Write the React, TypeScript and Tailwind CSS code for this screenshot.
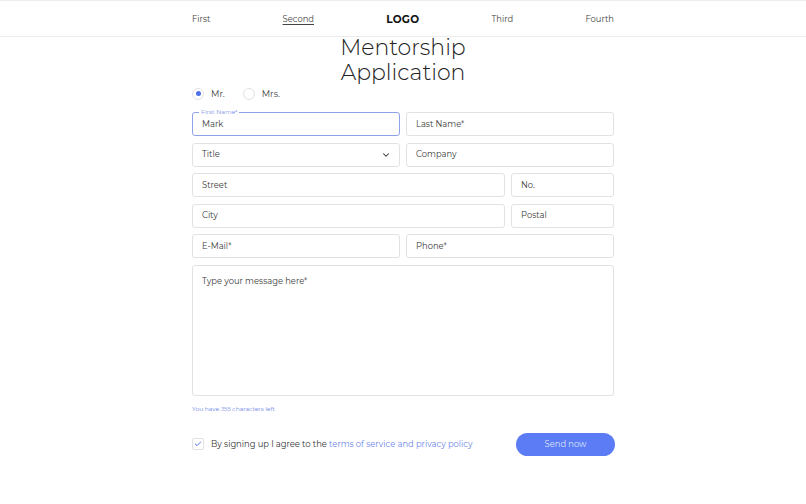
import { ChevronDown, Check } from 'lucide-react'

const font = { fontFamily: 'Montserrat, "Open Sans", "Liberation Sans", sans-serif' }

function Field({ label, className = '' }: { label: string; className?: string }) {
  return (
    <div
      className={`flex h-[24px] items-center rounded-[3px] border border-[#e2e2e2] px-[9px] text-[8.4px] text-[#3a3a3a] ${className}`}
    >
      {label}
    </div>
  )
}

export default function App() {
  return (
    <div className="min-h-[504px] w-full bg-white text-[#333]" style={font}>
      {/* Header */}
      <header className="h-[37px] border-y border-[#ececec]">
        <nav className="mx-auto flex h-full w-[422px] items-center justify-between pt-[2px] text-[8.4px] text-[#444]">
          <span>First</span>
          <span className="underline underline-offset-2">Second</span>
          <span className="text-[10.5px] font-bold tracking-wide text-[#111]">LOGO</span>
          <span>Third</span>
          <span>Fourth</span>
        </nav>
      </header>

      <main className="mx-auto w-[422px]">
        <h1 className="mt-[-2px] text-center text-[22px] font-light leading-[25px] text-[#222]">
          Mentorship
          <br />
          Application
        </h1>

        {/* Salutation */}
        <div className="mt-[2px] flex items-center gap-[7px] text-[8.8px] text-[#444]">
          <span className="flex h-[12px] w-[12px] items-center justify-center rounded-full border border-[#e2e2e2]">
            <span className="h-[5px] w-[5px] rounded-full bg-[#4f70ea]" />
          </span>
          <span>Mr.</span>
          <span className="ml-[11px] h-[12px] w-[12px] rounded-full border border-[#e2e2e2]" />
          <span>Mrs.</span>
        </div>

        <div className="mt-[12px] flex flex-col gap-[6.5px]">
          <div className="grid grid-cols-2 gap-[6px]">
            <div className="relative flex h-[24px] items-center rounded-[3px] border border-[#8ea2ea] px-[9px] text-[8.4px] text-[#3a3a3a]">
              <span className="absolute left-[6px] top-[-5px] bg-white px-[2px] text-[6.2px] leading-[8px] text-[#7b90e6]">
                First Name*
              </span>
              Mark
            </div>
            <Field label="Last Name*" />
          </div>
          <div className="grid grid-cols-2 gap-[6px]">
            <div className="flex h-[24px] items-center justify-between rounded-[3px] border border-[#e2e2e2] px-[9px] text-[8.4px] text-[#3a3a3a]">
              Title
              <ChevronDown size={10} strokeWidth={2.5} className="mr-[-1px] text-[#333]" />
            </div>
            <Field label="Company" />
          </div>
          <div className="grid grid-cols-[1fr_103px] gap-[6px]">
            <Field label="Street" />
            <Field label="No." />
          </div>
          <div className="grid grid-cols-[1fr_103px] gap-[6px]">
            <Field label="City" />
            <Field label="Postal" />
          </div>
          <div className="grid grid-cols-2 gap-[6px]">
            <Field label="E-Mail*" />
            <Field label="Phone*" />
          </div>
          <div className="h-[131px] rounded-[3px] border border-[#e2e2e2] px-[9px] pt-[9px] text-[8.4px] text-[#3a3a3a]">
            Type your message here*
          </div>
        </div>

        <p className="mt-[9px] text-[6px] text-[#6d86e8]">You have 355 characters left</p>

        <div className="mt-[19px] flex items-center justify-between">
          <div className="flex items-center gap-[7px] text-[8.4px] text-[#333]">
            <span className="flex h-[12px] w-[12px] items-center justify-center rounded-[2px] border border-[#e2e2e2]">
              <Check size={8} strokeWidth={3} className="text-[#4f70ea]" />
            </span>
            <span>
              By signing up I agree to the{' '}
              <span className="text-[#6d86e8]">terms of service and privacy policy</span>
            </span>
          </div>
          <button className="mr-[-1px] h-[23px] w-[99px] rounded-full bg-[#5b7cf4] text-[8.4px] text-[#dfe6ff]">
            Send now
          </button>
        </div>
      </main>
    </div>
  )
}
